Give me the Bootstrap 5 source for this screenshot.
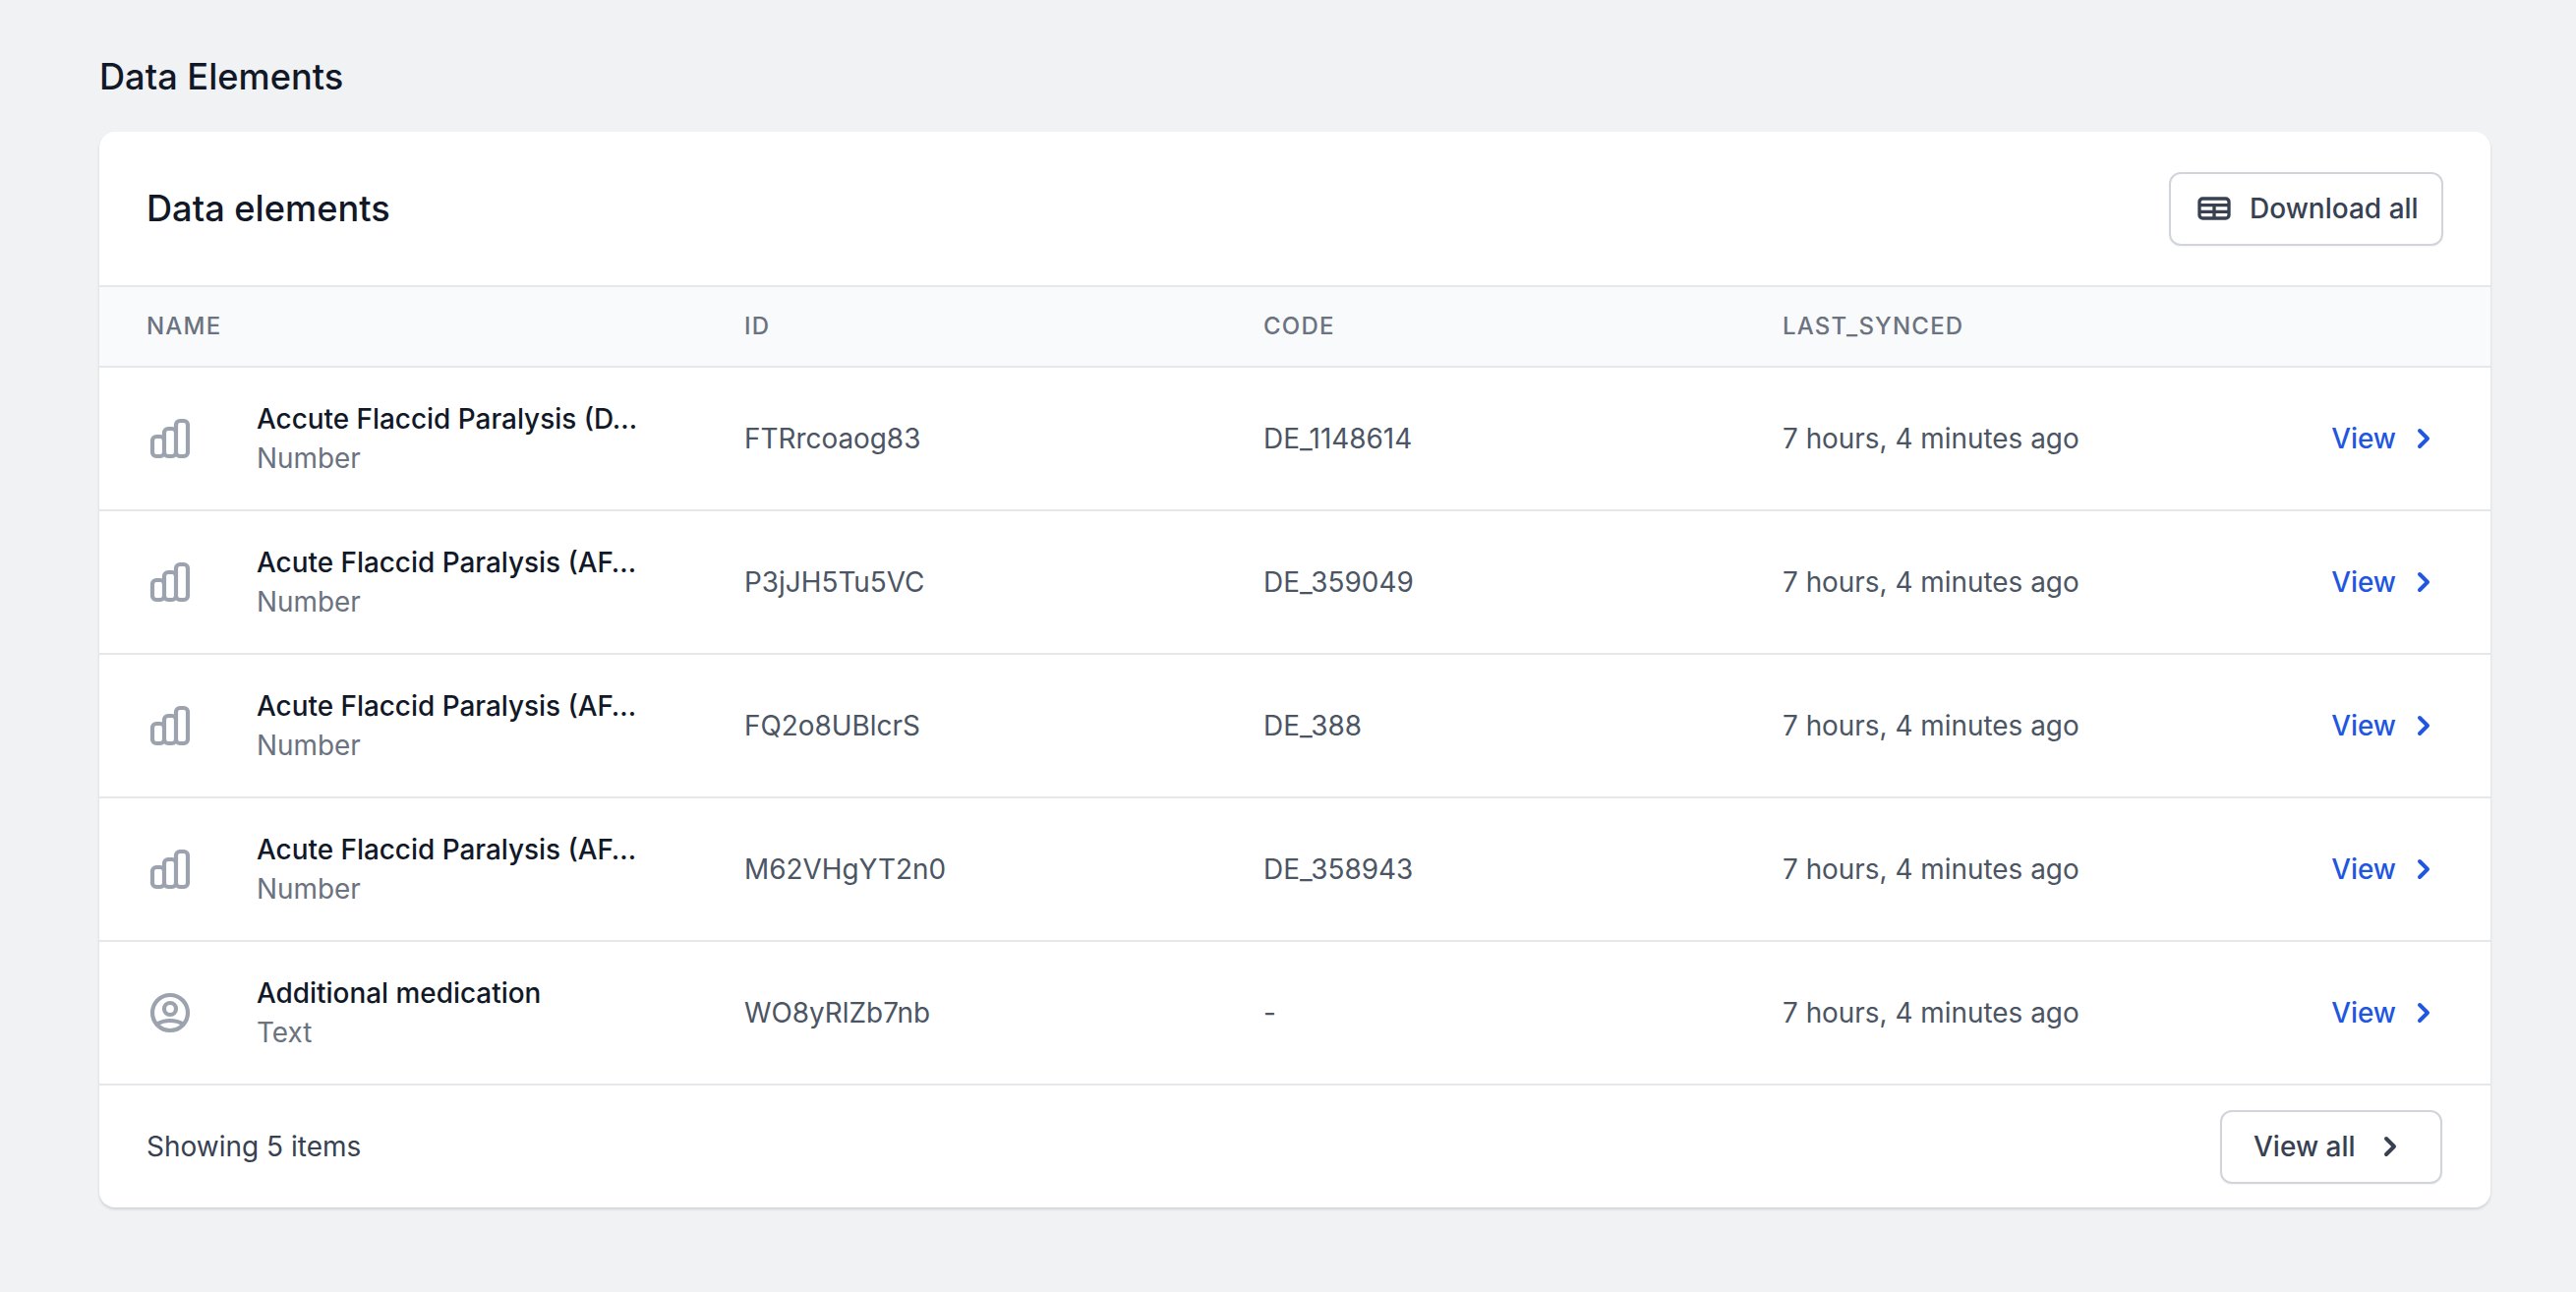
<!DOCTYPE html>
<html lang="en">
<head>
<meta charset="utf-8">
<title>Data Elements</title>
<link href="https://cdn.jsdelivr.net/npm/bootstrap@5.3.0/dist/css/bootstrap.min.css" rel="stylesheet">
<style>
html,body{height:100%}
body{background:#f1f2f4;font-family:Inter,"Liberation Sans",sans-serif;font-size:28px;color:#111827;padding:56px 87px 86px 101px;line-height:40px}
.pg-title{font-size:36.2px;font-weight:500;color:#111827;line-height:44px;margin:0 0 34px}
.el-card{background:#fff;border:0;border-radius:16px;box-shadow:0 2px 3px rgba(17,24,39,.15);overflow:hidden;--bs-card-bg:#fff}
.el-head{height:156px;padding:0 48px}
.el-head h2{font-size:36.2px;font-weight:500;line-height:44px;margin:0;color:#111827}
.el-btn{display:inline-flex;align-items:center;height:75px;border:2px solid #d1d5db;border-radius:12px;background:#fff;color:#374151;font-size:28px;font-weight:500;line-height:40px;box-shadow:0 1px 2px rgba(0,0,0,.05);--bs-btn-padding-x:0;--bs-btn-padding-y:0}
.el-btn.dl{width:279px;padding:0 0 0 24px;gap:16px}
.el-btn.va{width:226px;padding:0 0 0 32px;gap:15px}
.el-table{table-layout:fixed;width:100%;margin:0;--bs-table-bg:transparent;color:#4b5563}
.el-table th,.el-table td{border-bottom:2px solid #e5e7eb;padding:0 0 0 48px;vertical-align:middle;box-shadow:none}
.el-table thead tr{background:#f9fafb}
.el-table thead th{border-top:2px solid #e5e7eb;height:82px;font-size:24px;font-weight:500;letter-spacing:1.2px;color:#6b7280;text-transform:uppercase}
.el-table tbody td{height:146px;font-size:27.9px;color:#4b5563}
.c1{width:608px}.c2,.c3{width:528px}.c4{width:480px}
.el-name{gap:64px}
.el-name svg{color:#9ca3af;flex:none}
.nm{font-weight:500;color:#111827;line-height:40px;white-space:nowrap;font-size:27.9px}
.tp{color:#6b7280;line-height:40px}
.el-link{display:inline-flex;align-items:center;color:#2156e0;font-weight:500;text-decoration:none;gap:8px}
.el-table td.act{padding:0 48px 0 0;text-align:right}
.el-foot{height:124px;padding:0 49px 0 48px;color:#374151}
.dl-ico{color:#374151;flex:none}
</style>
</head>
<body>
<h1 class="pg-title">Data Elements</h1>
<div class="card el-card">
  <div class="d-flex align-items-center justify-content-between el-head">
    <h2>Data elements</h2>
    <button type="button" class="btn el-btn dl">
      <svg class="dl-ico" width="40" height="40" viewBox="0 0 24 24" fill="none" stroke="currentColor" stroke-width="2" stroke-linecap="round" stroke-linejoin="round"><path d="M3 10h18M3 14h18m-9-4v8m-7 0h14a2 2 0 002-2V8a2 2 0 00-2-2H5a2 2 0 00-2 2v8a2 2 0 002 2z"/></svg>
      <span>Download all</span>
    </button>
  </div>
  <table class="table el-table">
    <colgroup><col class="c1"><col class="c2"><col class="c3"><col class="c4"><col></colgroup>
    <thead>
      <tr><th>Name</th><th>ID</th><th>Code</th><th>Last_synced</th><th></th></tr>
    </thead>
    <tbody>
      <tr>
        <td><div class="d-flex align-items-center el-name"><svg width="48" height="48" viewBox="0 0 24 24" fill="none" stroke="currentColor" stroke-width="2.1" stroke-linecap="round" stroke-linejoin="round"><path d="M9 19v-6a2 2 0 00-2-2H5a2 2 0 00-2 2v6a2 2 0 002 2h2a2 2 0 002-2zm0 0V9a2 2 0 012-2h2a2 2 0 012 2v10m-6 0a2 2 0 002 2h2a2 2 0 002-2m0 0V5a2 2 0 012-2h2a2 2 0 012 2v14a2 2 0 01-2 2h-2a2 2 0 01-2-2z"/></svg><div><div class="nm">Accute Flaccid Paralysis (D…</div><div class="tp">Number</div></div></div></td>
        <td>FTRrcoaog83</td><td>DE_1148614</td><td>7 hours, 4 minutes ago</td>
        <td class="act"><a class="el-link" href="#">View<svg width="40" height="40" viewBox="0 0 20 20" fill="currentColor"><path fill-rule="evenodd" d="M7.293 14.707a1 1 0 010-1.414L10.586 10 7.293 6.707a1 1 0 011.414-1.414l4 4a1 1 0 010 1.414l-4 4a1 1 0 01-1.414 0z" clip-rule="evenodd"/></svg></a></td>
      </tr>
      <tr>
        <td><div class="d-flex align-items-center el-name"><svg width="48" height="48" viewBox="0 0 24 24" fill="none" stroke="currentColor" stroke-width="2.1" stroke-linecap="round" stroke-linejoin="round"><path d="M9 19v-6a2 2 0 00-2-2H5a2 2 0 00-2 2v6a2 2 0 002 2h2a2 2 0 002-2zm0 0V9a2 2 0 012-2h2a2 2 0 012 2v10m-6 0a2 2 0 002 2h2a2 2 0 002-2m0 0V5a2 2 0 012-2h2a2 2 0 012 2v14a2 2 0 01-2 2h-2a2 2 0 01-2-2z"/></svg><div><div class="nm">Acute Flaccid Paralysis (AF…</div><div class="tp">Number</div></div></div></td>
        <td>P3jJH5Tu5VC</td><td>DE_359049</td><td>7 hours, 4 minutes ago</td>
        <td class="act"><a class="el-link" href="#">View<svg width="40" height="40" viewBox="0 0 20 20" fill="currentColor"><path fill-rule="evenodd" d="M7.293 14.707a1 1 0 010-1.414L10.586 10 7.293 6.707a1 1 0 011.414-1.414l4 4a1 1 0 010 1.414l-4 4a1 1 0 01-1.414 0z" clip-rule="evenodd"/></svg></a></td>
      </tr>
      <tr>
        <td><div class="d-flex align-items-center el-name"><svg width="48" height="48" viewBox="0 0 24 24" fill="none" stroke="currentColor" stroke-width="2.1" stroke-linecap="round" stroke-linejoin="round"><path d="M9 19v-6a2 2 0 00-2-2H5a2 2 0 00-2 2v6a2 2 0 002 2h2a2 2 0 002-2zm0 0V9a2 2 0 012-2h2a2 2 0 012 2v10m-6 0a2 2 0 002 2h2a2 2 0 002-2m0 0V5a2 2 0 012-2h2a2 2 0 012 2v14a2 2 0 01-2 2h-2a2 2 0 01-2-2z"/></svg><div><div class="nm">Acute Flaccid Paralysis (AF…</div><div class="tp">Number</div></div></div></td>
        <td>FQ2o8UBlcrS</td><td>DE_388</td><td>7 hours, 4 minutes ago</td>
        <td class="act"><a class="el-link" href="#">View<svg width="40" height="40" viewBox="0 0 20 20" fill="currentColor"><path fill-rule="evenodd" d="M7.293 14.707a1 1 0 010-1.414L10.586 10 7.293 6.707a1 1 0 011.414-1.414l4 4a1 1 0 010 1.414l-4 4a1 1 0 01-1.414 0z" clip-rule="evenodd"/></svg></a></td>
      </tr>
      <tr>
        <td><div class="d-flex align-items-center el-name"><svg width="48" height="48" viewBox="0 0 24 24" fill="none" stroke="currentColor" stroke-width="2.1" stroke-linecap="round" stroke-linejoin="round"><path d="M9 19v-6a2 2 0 00-2-2H5a2 2 0 00-2 2v6a2 2 0 002 2h2a2 2 0 002-2zm0 0V9a2 2 0 012-2h2a2 2 0 012 2v10m-6 0a2 2 0 002 2h2a2 2 0 002-2m0 0V5a2 2 0 012-2h2a2 2 0 012 2v14a2 2 0 01-2 2h-2a2 2 0 01-2-2z"/></svg><div><div class="nm">Acute Flaccid Paralysis (AF…</div><div class="tp">Number</div></div></div></td>
        <td>M62VHgYT2n0</td><td>DE_358943</td><td>7 hours, 4 minutes ago</td>
        <td class="act"><a class="el-link" href="#">View<svg width="40" height="40" viewBox="0 0 20 20" fill="currentColor"><path fill-rule="evenodd" d="M7.293 14.707a1 1 0 010-1.414L10.586 10 7.293 6.707a1 1 0 011.414-1.414l4 4a1 1 0 010 1.414l-4 4a1 1 0 01-1.414 0z" clip-rule="evenodd"/></svg></a></td>
      </tr>
      <tr>
        <td><div class="d-flex align-items-center el-name"><svg width="48" height="48" viewBox="0 0 24 24" fill="none" stroke="currentColor" stroke-width="2.1" stroke-linecap="round" stroke-linejoin="round"><path d="M5.121 17.804A13.937 13.937 0 0112 16c2.5 0 4.847.655 6.879 1.804M15 10a3 3 0 11-6 0 3 3 0 016 0zm6 2a9 9 0 11-18 0 9 9 0 0118 0z"/></svg><div><div class="nm">Additional medication</div><div class="tp">Text</div></div></div></td>
        <td>WO8yRlZb7nb</td><td>-</td><td>7 hours, 4 minutes ago</td>
        <td class="act"><a class="el-link" href="#">View<svg width="40" height="40" viewBox="0 0 20 20" fill="currentColor"><path fill-rule="evenodd" d="M7.293 14.707a1 1 0 010-1.414L10.586 10 7.293 6.707a1 1 0 011.414-1.414l4 4a1 1 0 010 1.414l-4 4a1 1 0 01-1.414 0z" clip-rule="evenodd"/></svg></a></td>
      </tr>
    </tbody>
  </table>
  <div class="d-flex align-items-center justify-content-between el-foot">
    <span>Showing 5 items</span>
    <button type="button" class="btn el-btn va">
      <span>View all</span>
      <svg class="dl-ico" width="40" height="40" viewBox="0 0 20 20" fill="currentColor"><path fill-rule="evenodd" d="M7.293 14.707a1 1 0 010-1.414L10.586 10 7.293 6.707a1 1 0 011.414-1.414l4 4a1 1 0 010 1.414l-4 4a1 1 0 01-1.414 0z" clip-rule="evenodd"/></svg>
    </button>
  </div>
</div>
<script src="https://cdn.jsdelivr.net/npm/bootstrap@5.3.0/dist/js/bootstrap.bundle.min.js"></script>
</body>
</html>
